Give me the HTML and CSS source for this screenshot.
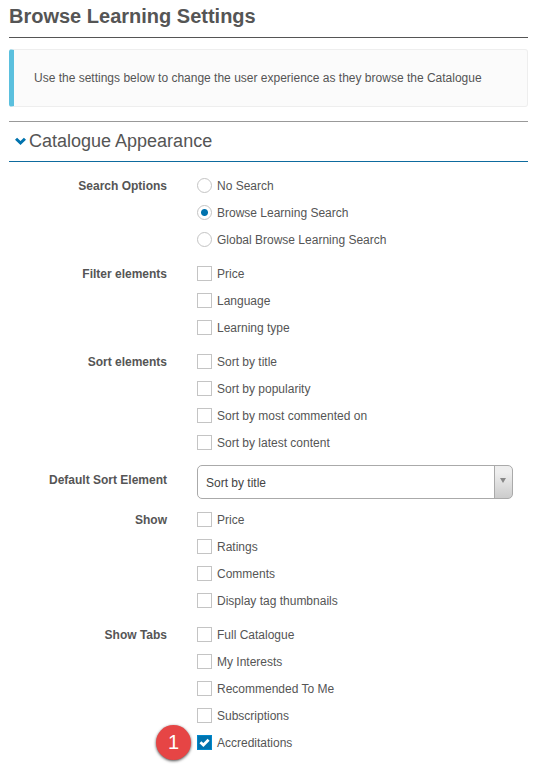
FILE: index.html
```html
<!DOCTYPE html>
<html lang="en">
<head>
    <meta charset="UTF-8">
    <meta name="viewport" content="width=device-width, initial-scale=1.0">
    <title>Browse Learning Settings</title>
    <link rel="stylesheet" href="styles.css">
</head>
<body>
<h1>Browse Learning Settings</h1>

<p class="callout">Use the settings below to change the user experience as they browse the Catalogue</p>

<h2>
    <svg class="chevron" viewBox="0 0 11 8" aria-hidden="true"><path d="M0 2.8 L2.1 0.8 L5.5 4 L8.9 0.8 L11 2.8 L5.5 8 Z" fill="#0073ae"/></svg>
    Catalogue Appearance
</h2>

<form class="settings">
    <div class="group" role="radiogroup" aria-labelledby="search-label">
        <div class="group-label" id="search-label">Search Options</div>
        <div class="options">
            <label class="option"><input type="radio" name="search">No Search</label>
            <label class="option"><input type="radio" name="search" checked>Browse Learning Search</label>
            <label class="option"><input type="radio" name="search">Global Browse Learning Search</label>
        </div>
    </div>

    <div class="group" role="group" aria-labelledby="filter-label">
        <div class="group-label" id="filter-label">Filter elements</div>
        <div class="options">
            <label class="option"><input type="checkbox" name="filter">Price</label>
            <label class="option"><input type="checkbox" name="filter">Language</label>
            <label class="option"><input type="checkbox" name="filter">Learning type</label>
        </div>
    </div>

    <div class="group" role="group" aria-labelledby="sort-label">
        <div class="group-label" id="sort-label">Sort elements</div>
        <div class="options">
            <label class="option"><input type="checkbox" name="sort">Sort by title</label>
            <label class="option"><input type="checkbox" name="sort">Sort by popularity</label>
            <label class="option"><input type="checkbox" name="sort">Sort by most commented on</label>
            <label class="option"><input type="checkbox" name="sort">Sort by latest content</label>
        </div>
    </div>

    <div class="group select-group">
        <label class="group-label" for="default-sort">Default Sort Element</label>
        <select id="default-sort">
            <option>Sort by title</option>
            <option>Sort by popularity</option>
            <option>Sort by most commented on</option>
            <option>Sort by latest content</option>
        </select>
    </div>

    <div class="group" role="group" aria-labelledby="show-label">
        <div class="group-label" id="show-label">Show</div>
        <div class="options">
            <label class="option"><input type="checkbox" name="show">Price</label>
            <label class="option"><input type="checkbox" name="show">Ratings</label>
            <label class="option"><input type="checkbox" name="show">Comments</label>
            <label class="option"><input type="checkbox" name="show">Display tag thumbnails</label>
        </div>
    </div>

    <div class="group" role="group" aria-labelledby="tabs-label">
        <div class="group-label" id="tabs-label">Show Tabs</div>
        <div class="options">
            <label class="option"><input type="checkbox" name="tabs">Full Catalogue</label>
            <label class="option"><input type="checkbox" name="tabs">My Interests</label>
            <label class="option"><input type="checkbox" name="tabs">Recommended To Me</label>
            <label class="option"><input type="checkbox" name="tabs">Subscriptions</label>
            <label class="option"><input type="checkbox" name="tabs" checked>Accreditations<span class="marker">1</span></label>
        </div>
    </div>
</form>

</body>
</html>
```

FILE: styles.css
```css
* {
    box-sizing: border-box;
}

body {
    margin: 0;
    padding: 0 8px 11px 9px;
    background-color: #ffffff;
    color: #555555;
    font-family: "Liberation Sans", Arial, sans-serif;
    font-size: 12px;
}

h1 {
    margin: 0 0 11px;
    padding: 4px 0 9px;
    border-bottom: 1px solid #555555;
    font-size: 20px;
    line-height: 24px;
}

.callout {
    margin: 0 0 14px;
    padding: 19px 20px;
    border: 1px solid #eeeeee;
    border-left: 5px solid #5bc0de;
    border-radius: 3px;
    background-color: #fbfbfb;
    line-height: 18px;
}

h2 {
    display: flex;
    align-items: center;
    gap: 3px;
    margin: 0 0 10px;
    padding: 7px 6px 8px;
    border-top: 1px solid #999999;
    border-bottom: 1px solid #0e6b9e;
    font-size: 18px;
    font-weight: normal;
    line-height: 24px;
}

.chevron {
    width: 11px;
    height: 8px;
}

.settings {
    display: flex;
    flex-direction: column;
    gap: 7px;
    padding-right: 15px;
}

.group {
    display: grid;
    grid-template-columns: 158px 1fr;
    column-gap: 30px;
}

.group-label {
    font-weight: bold;
    line-height: 28px;
    text-align: right;
}

.option {
    display: flex;
    position: relative;
    align-items: center;
    gap: 5px;
    width: fit-content;
    height: 27px;
}

input {
    appearance: none;
    width: 15px;
    height: 15px;
    margin: 0;
    border: 1px solid #c4c4c4;
    background-color: #ffffff;
}

input[type="radio"] {
    border-radius: 50%;
}

input[type="radio"]:checked {
    background-image: radial-gradient(circle, #0073ae 3px, transparent 4px);
}

input[type="checkbox"]:checked {
    border-color: #0088cc;
    background: #0073ae url("data:image/svg+xml,%3Csvg xmlns='http://www.w3.org/2000/svg' viewBox='0 0 13 13'%3E%3Cpath d='M2.4 6.2 L5.4 9 L10.6 3.8' fill='none' stroke='white' stroke-width='2.8'/%3E%3C/svg%3E") center / 13px 13px no-repeat;
}

/* Default sort drop-down */
.select-group {
    padding-top: 2px;
}

.select-group .group-label {
    line-height: 30px;
}

select {
    appearance: none;
    width: 100%;
    height: 34px;
    padding: 1px 26px 0 8px;
    border: 1px solid #aaaaaa;
    border-radius: 5px;
    background-color: #ffffff;
    background-image:
        url("data:image/svg+xml,%3Csvg xmlns='http://www.w3.org/2000/svg' viewBox='0 0 6 5'%3E%3Cpath d='M0 0 H6 L3 5 Z' fill='%23888888'/%3E%3C/svg%3E"),
        linear-gradient(#eeeeee 20%, #cccccc),
        linear-gradient(#aaaaaa, #aaaaaa);
    background-position: right 6px top 12px, right top, right 17px top;
    background-size: 6px 5px, 17px 100%, 1px 100%;
    background-repeat: no-repeat;
    color: #444444;
    font-family: inherit;
    font-size: 12px;
}

/* Numbered marker beside an option */
.marker {
    position: absolute;
    top: -4px;
    left: -41px;
    width: 35px;
    height: 35px;
    border-radius: 50%;
    background-color: #e64545;
    box-shadow: 0 1px 3px rgba(0, 0, 0, 0.7);
    color: #ffffff;
    font-size: 20px;
    line-height: 35px;
    text-align: center;
}
```
